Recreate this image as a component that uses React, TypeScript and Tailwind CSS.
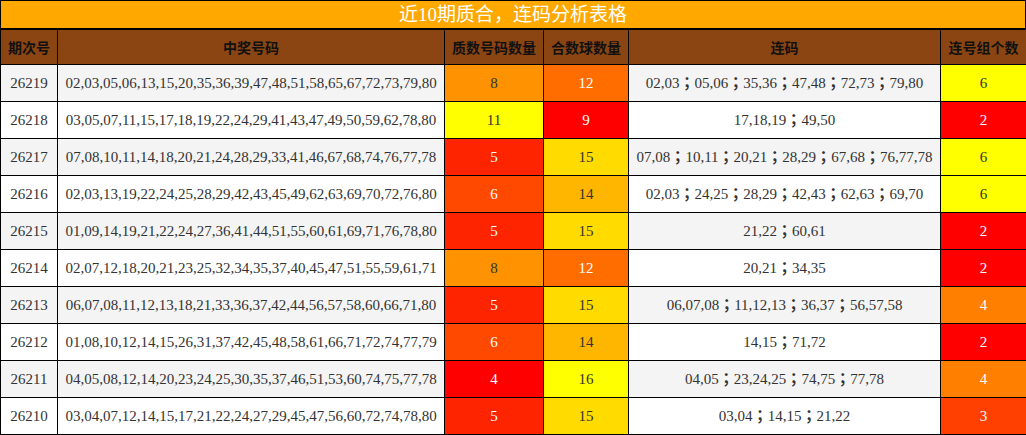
import React from "react";

type Row = {
  id: string;
  nums: string;
  prime: number;
  comp: number;
  runs: string[];
  groups: number;
};

const rows: Row[] = [
  { id: "26219", nums: "02,03,05,06,13,15,20,35,36,39,47,48,51,58,65,67,72,73,79,80", prime: 8, comp: 12, runs: ["02,03", "05,06", "35,36", "47,48", "72,73", "79,80"], groups: 6 },
  { id: "26218", nums: "03,05,07,11,15,17,18,19,22,24,29,41,43,47,49,50,59,62,78,80", prime: 11, comp: 9, runs: ["17,18,19", "49,50"], groups: 2 },
  { id: "26217", nums: "07,08,10,11,14,18,20,21,24,28,29,33,41,46,67,68,74,76,77,78", prime: 5, comp: 15, runs: ["07,08", "10,11", "20,21", "28,29", "67,68", "76,77,78"], groups: 6 },
  { id: "26216", nums: "02,03,13,19,22,24,25,28,29,42,43,45,49,62,63,69,70,72,76,80", prime: 6, comp: 14, runs: ["02,03", "24,25", "28,29", "42,43", "62,63", "69,70"], groups: 6 },
  { id: "26215", nums: "01,09,14,19,21,22,24,27,36,41,44,51,55,60,61,69,71,76,78,80", prime: 5, comp: 15, runs: ["21,22", "60,61"], groups: 2 },
  { id: "26214", nums: "02,07,12,18,20,21,23,25,32,34,35,37,40,45,47,51,55,59,61,71", prime: 8, comp: 12, runs: ["20,21", "34,35"], groups: 2 },
  { id: "26213", nums: "06,07,08,11,12,13,18,21,33,36,37,42,44,56,57,58,60,66,71,80", prime: 5, comp: 15, runs: ["06,07,08", "11,12,13", "36,37", "56,57,58"], groups: 4 },
  { id: "26212", nums: "01,08,10,12,14,15,26,31,37,42,45,48,58,61,66,71,72,74,77,79", prime: 6, comp: 14, runs: ["14,15", "71,72"], groups: 2 },
  { id: "26211", nums: "04,05,08,12,14,20,23,24,25,30,35,37,46,51,53,60,74,75,77,78", prime: 4, comp: 16, runs: ["04,05", "23,24,25", "74,75", "77,78"], groups: 4 },
  { id: "26210", nums: "03,04,07,12,14,15,17,21,22,24,27,29,45,47,56,60,72,74,78,80", prime: 5, comp: 15, runs: ["03,04", "14,15", "21,22"], groups: 3 },
];

function scale(v: number, min: number, max: number) {
  const r = Math.max(0, Math.min(1, (v - min) / (max - min)));
  const g = Math.round(r * 255);
  return {
    style: { backgroundColor: `rgb(255, ${g}, 0)`, color: r > 0.5 ? "#333333" : "#ffffff" },
  };
}

const font = { fontFamily: '"Liberation Serif", "Noto Sans CJK SC", serif' };
const cjk = { fontFamily: '"Noto Sans CJK SC", "Liberation Sans", sans-serif' };
const semi = { fontFamily: '"Noto Sans CJK TC", "Noto Sans CJK SC", sans-serif' };

export default function App() {
  return (
    <div className="w-[1026px] bg-white" style={font}>
      <div
        className="h-[29px] border border-black bg-[#FFA800] text-white text-[19px] flex items-center justify-center leading-none"
        style={font}
      >
        近10期质合，连码分析表格
      </div>
      <table className="w-[1026px] table-fixed border-collapse border border-black text-[15px] text-[#333333]">
        <colgroup>
          <col className="w-[57px]" />
          <col className="w-[387px]" />
          <col className="w-[99px]" />
          <col className="w-[85px]" />
          <col className="w-[312px]" />
          <col className="w-[86px]" />
        </colgroup>
        <thead>
          <tr className="bg-[#8B4513] text-[14px] font-bold text-[#111111]" style={cjk}>
            <th className="h-[35px] border border-black p-0 text-center">期次号</th>
            <th className="h-[35px] border border-black p-0 text-center">中奖号码</th>
            <th className="h-[35px] border border-black p-0 text-center">质数号码数量</th>
            <th className="h-[35px] border border-black p-0 text-center">合数球数量</th>
            <th className="h-[35px] border border-black p-0 text-center">连码</th>
            <th className="h-[35px] border border-black p-0 text-center">连号组个数</th>
          </tr>
        </thead>
        <tbody>
          {rows.map((r, i) => (
            <tr key={r.id} className={i % 2 === 0 ? "bg-[#F4F4F4]" : "bg-white"}>
              <td className="h-[37px] border border-black p-0 text-center">{r.id}</td>
              <td className="h-[37px] border border-black p-0 text-center whitespace-nowrap">{r.nums}</td>
              <td className="h-[37px] border border-black p-0 text-center" {...scale(r.prime, 4, 11)}>
                {r.prime}
              </td>
              <td className="h-[37px] border border-black p-0 text-center" {...scale(r.comp, 9, 16)}>
                {r.comp}
              </td>
              <td className="h-[37px] border border-black p-0 text-center whitespace-nowrap">
                {r.runs.map((s, k) => (
                  <React.Fragment key={k}>
                    {k > 0 && (
                      <span className="font-bold" style={semi}>
                        ；
                      </span>
                    )}
                    {s}
                  </React.Fragment>
                ))}
              </td>
              <td className="h-[37px] border border-black p-0 text-center" {...scale(r.groups, 2, 6)}>
                {r.groups}
              </td>
            </tr>
          ))}
        </tbody>
      </table>
    </div>
  );
}
